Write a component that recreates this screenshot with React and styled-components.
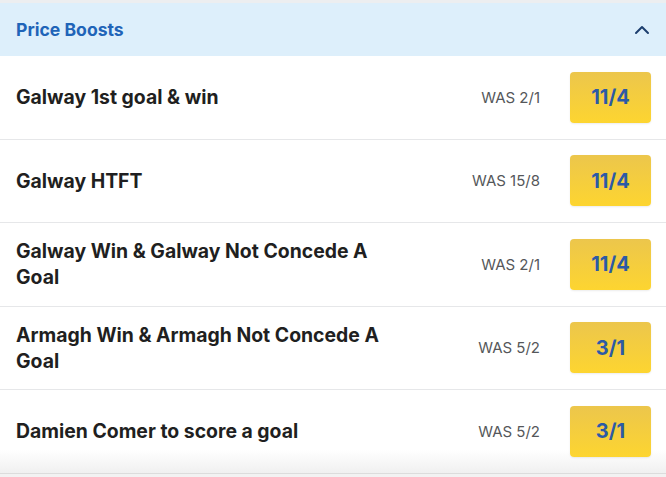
import React from 'react';
import styled, { createGlobalStyle } from 'styled-components';

const GlobalStyle = createGlobalStyle`
  * { box-sizing: border-box; }
  body {
    margin: 0;
    background: #ffffff;
    font-family: Inter, "Noto Sans", sans-serif;
  }
`;

const Panel = styled.section`
  width: 666px;
  height: 477px;
  border-top: 3px solid #eceef0;
  background: #f2f2f2;
  overflow: hidden;
`;

const Header = styled.div`
  display: flex;
  align-items: center;
  justify-content: space-between;
  height: 53px;
  padding: 0 15px 0 16px;
  background: #ddeffb;
`;

const Title = styled.h2`
  margin: 0;
  font-size: 17.6px;
  font-weight: 700;
  color: #1f64b8;
`;

const Chevron = styled.svg`
  width: 18px;
  height: 18px;
  display: block;
`;

const List = styled.ul`
  list-style: none;
  margin: 0;
  padding: 0;
`;

const Row = styled.li`
  display: flex;
  align-items: center;
  height: 83.5px;
  padding: 0 15px 0 16px;
  background: ${({ $last }) =>
    $last ? 'linear-gradient(#ffffff 0%, #ffffff 72%, #f0f0f0 100%)' : '#ffffff'};
  border-bottom: 1px solid ${({ $last }) => ($last ? '#dcdcdc' : '#e6e7e9')};
`;

const Market = styled.span`
  max-width: 385px;
  font-size: 19.4px;
  line-height: 26px;
  font-weight: 700;
  color: #1f1f21;
`;

const Was = styled.span`
  margin-left: auto;
  margin-right: 30px;
  font-size: 15px;
  color: #55575a;
  white-space: nowrap;
`;

const Price = styled.button`
  width: 81px;
  height: 51px;
  border: none;
  border-radius: 4px;
  background: linear-gradient(#ecc64c, #fdd530);
  color: #2c5aa6;
  font-family: inherit;
  font-size: 20px;
  font-weight: 700;
  box-shadow: 0 1px 2px rgba(0, 0, 0, 0.08);
`;

const boosts = [
  { name: 'Galway 1st goal & win', was: '2/1', price: '11/4' },
  { name: 'Galway HTFT', was: '15/8', price: '11/4' },
  { name: 'Galway Win & Galway Not Concede A Goal', was: '2/1', price: '11/4' },
  { name: 'Armagh Win & Armagh Not Concede A Goal', was: '5/2', price: '3/1' },
  { name: 'Damien Comer to score a goal', was: '5/2', price: '3/1' },
];

const App = () => (
  <>
    <GlobalStyle />
    <Panel>
      <Header>
        <Title>Price Boosts</Title>
        <Chevron viewBox="0 0 18 18">
          <path d="M3 12 L9 6 L15 12" fill="none" stroke="#1d3f6e" strokeWidth="2" strokeLinecap="round" strokeLinejoin="round" />
        </Chevron>
      </Header>
      <List>
        {boosts.map((b, i) => (
          <Row key={b.name} $last={i === boosts.length - 1}>
            <Market>{b.name}</Market>
            <Was>WAS {b.was}</Was>
            <Price>{b.price}</Price>
          </Row>
        ))}
      </List>
    </Panel>
  </>
);

export default App;
